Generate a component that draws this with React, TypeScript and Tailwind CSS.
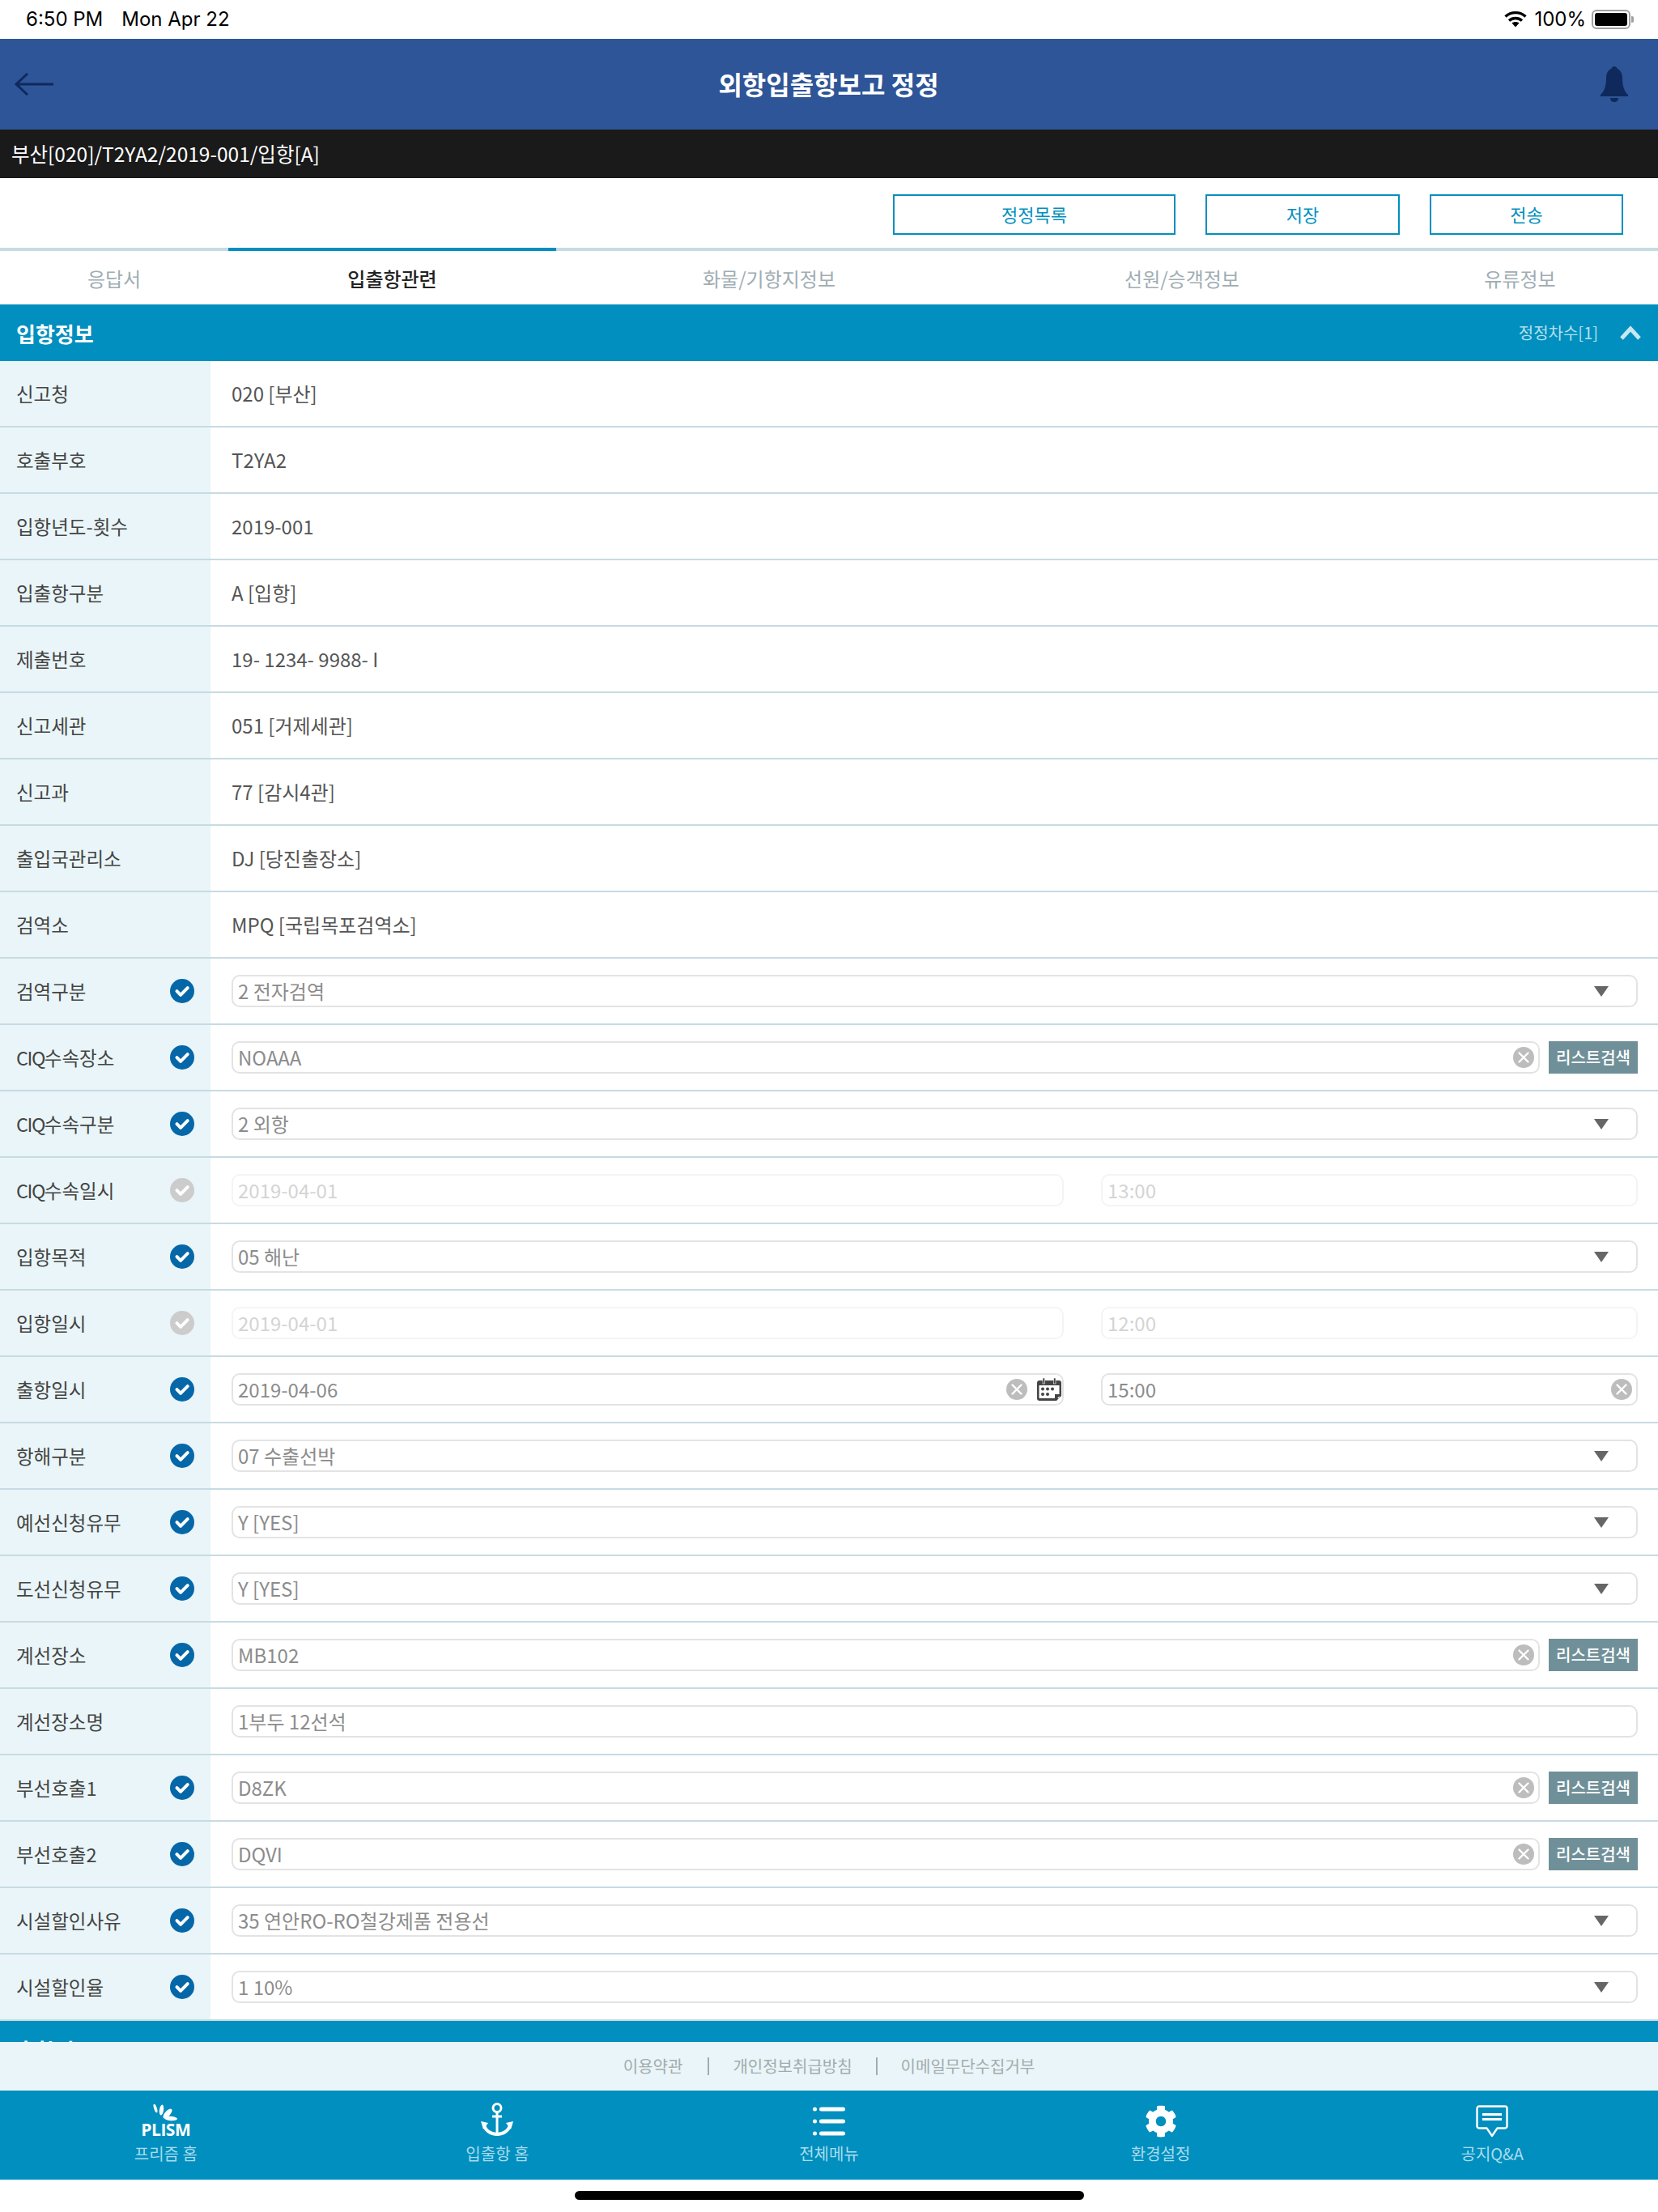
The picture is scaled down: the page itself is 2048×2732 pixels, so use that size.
import { FaCog } from 'react-icons/fa';

type Field =
  | { kind: 'text'; value: string }
  | { kind: 'select'; value: string }
  | { kind: 'search'; value: string }
  | { kind: 'input'; value: string }
  | { kind: 'datetime'; date: string; time: string; disabled?: boolean };

interface Row { label: string; check?: 'on' | 'off'; field: Field }

const ROWS: Row[] = [
  { label: '신고청', field: { kind: 'text', value: '020 [부산]' } },
  { label: '호출부호', field: { kind: 'text', value: 'T2YA2' } },
  { label: '입항년도-횟수', field: { kind: 'text', value: '2019-001' } },
  { label: '입출항구분', field: { kind: 'text', value: 'A [입항]' } },
  { label: '제출번호', field: { kind: 'text', value: '19- 1234- 9988- I' } },
  { label: '신고세관', field: { kind: 'text', value: '051 [거제세관]' } },
  { label: '신고과', field: { kind: 'text', value: '77 [감시4관]' } },
  { label: '출입국관리소', field: { kind: 'text', value: 'DJ [당진출장소]' } },
  { label: '검역소', field: { kind: 'text', value: 'MPQ [국립목포검역소]' } },
  { label: '검역구분', check: 'on', field: { kind: 'select', value: '2 전자검역' } },
  { label: 'CIQ수속장소', check: 'on', field: { kind: 'search', value: 'NOAAA' } },
  { label: 'CIQ수속구분', check: 'on', field: { kind: 'select', value: '2 외항' } },
  { label: 'CIQ수속일시', check: 'off', field: { kind: 'datetime', date: '2019-04-01', time: '13:00', disabled: true } },
  { label: '입항목적', check: 'on', field: { kind: 'select', value: '05 해난' } },
  { label: '입항일시', check: 'off', field: { kind: 'datetime', date: '2019-04-01', time: '12:00', disabled: true } },
  { label: '출항일시', check: 'on', field: { kind: 'datetime', date: '2019-04-06', time: '15:00' } },
  { label: '항해구분', check: 'on', field: { kind: 'select', value: '07 수출선박' } },
  { label: '예선신청유무', check: 'on', field: { kind: 'select', value: 'Y [YES]' } },
  { label: '도선신청유무', check: 'on', field: { kind: 'select', value: 'Y [YES]' } },
  { label: '계선장소', check: 'on', field: { kind: 'search', value: 'MB102' } },
  { label: '계선장소명', field: { kind: 'input', value: '1부두 12선석' } },
  { label: '부선호출1', check: 'on', field: { kind: 'search', value: 'D8ZK' } },
  { label: '부선호출2', check: 'on', field: { kind: 'search', value: 'DQVI' } },
  { label: '시설할인사유', check: 'on', field: { kind: 'select', value: '35 연안RO-RO철강제품 전용선' } },
  { label: '시설할인율', check: 'on', field: { kind: 'select', value: '1 10%' } },
];

const TABS = [
  { label: '응답서', cls: 'w-[282px]' },
  { label: '입출항관련', cls: 'w-[405px]', active: true },
  { label: '화물/기항지정보', cls: 'w-[526px]' },
  { label: '선원/승객정보', cls: 'w-[494px]' },
  { label: '유류정보', cls: 'w-[341px]' },
];

function CheckBadge({ on }: { on: boolean }) {
  return (
    <svg width="30" height="30" viewBox="0 0 30 30" className="shrink-0">
      <circle cx="15" cy="15" r="15" fill={on ? '#0667a8' : '#cccccc'} />
      <path d="M8.5 15.2l4.6 4.6 8.6-8.6" fill="none" stroke="white" strokeWidth="4" strokeLinecap="round" strokeLinejoin="round" />
    </svg>
  );
}

function ClearIcon() {
  return (
    <svg width="26" height="26" viewBox="0 0 26 26" className="shrink-0">
      <circle cx="13" cy="13" r="13" fill="#bdbdbd" />
      <path d="M7.5 7.5l11 11M18.5 7.5l-11 11" stroke="white" strokeWidth="2.4" strokeLinecap="round" />
    </svg>
  );
}

function CalendarIcon() {
  return (
    <svg width="30" height="28" viewBox="0 0 30 28" className="shrink-0">
      <path d="M3 3h24a3 3 0 0 1 3 3v16l-6 6H3a3 3 0 0 1-3-3V6a3 3 0 0 1 3-3z" fill="#444" />
      <rect x="2.5" y="9" width="25" height="16" fill="white" />
      <path d="M30 20l-8 0v8z" fill="#444" />
      <rect x="7" y="0" width="2.5" height="7" fill="#444" stroke="white" strokeWidth="0.6" />
      <rect x="20.5" y="0" width="2.5" height="7" fill="#444" stroke="white" strokeWidth="0.6" />
      {[7, 13, 19].map((x) => <circle key={x} cx={x} cy="13.5" r="2" fill="#444" />)}
      {[7, 13].map((x) => <circle key={x} cx={x} cy="20" r="2" fill="#444" />)}
    </svg>
  );
}

function Caret() {
  return (
    <svg width="18" height="13" viewBox="0 0 18 13" className="shrink-0">
      <path d="M0 0h18l-9 13z" fill="#666" />
    </svg>
  );
}

function Box({ children, disabled, className }: { children: React.ReactNode; disabled?: boolean; className?: string }) {
  return (
    <div className={`flex h-10 items-center rounded-[10px] border-2 pl-[6px] ${disabled ? 'border-[#f4f4f4] text-[#d4d4d4]' : 'border-[#e3e3e3] text-[#8c8c8c]'} ${className ?? ''}`}>
      {children}
    </div>
  );
}

function FieldCell({ field }: { field: Field }) {
  switch (field.kind) {
    case 'text':
      return <span className="text-[#555]">{field.value}</span>;
    case 'input':
      return <Box className="w-full"><span>{field.value}</span></Box>;
    case 'select':
      return (
        <Box className="w-full justify-between pr-[34px]">
          <span>{field.value}</span>
          <Caret />
        </Box>
      );
    case 'search':
      return (
        <div className="flex w-full gap-[11px]">
          <Box className="flex-1 justify-between pr-[5px]">
            <span>{field.value}</span>
            <ClearIcon />
          </Box>
          <button className="h-10 w-[110px] bg-[#709099] text-[20px] font-medium text-white">리스트검색</button>
        </div>
      );
    case 'datetime':
      return (
        <div className="flex w-full gap-[46px]">
          <Box disabled={field.disabled} className="w-[1028px] justify-between pr-[1px]">
            <span>{field.date}</span>
            {!field.disabled && (
              <span className="flex items-center gap-[12px]"><ClearIcon /><CalendarIcon /></span>
            )}
          </Box>
          <Box disabled={field.disabled} className="flex-1 justify-between pr-[5px]">
            <span>{field.time}</span>
            {!field.disabled && <ClearIcon />}
          </Box>
        </div>
      );
  }
}

function SectionHeader({ title, children }: { title: string; children?: React.ReactNode }) {
  return (
    <div className="flex h-[70px] items-center justify-between bg-[#008fbe] pl-5 pr-[20px]">
      <span className="text-[26px] font-bold text-white">{title}</span>
      {children}
    </div>
  );
}

function RowLabel({ label }: { label: string }) {
  if (label.startsWith('CIQ')) {
    return <span className="pt-[2px]"><span className="tracking-[-1.5px]">CIQ</span>{label.slice(3)}</span>;
  }
  return <span className="pt-[2px]">{label}</span>;
}

function PlismLogo() {
  return (
    <div className="flex flex-col items-center">
      <svg width="32" height="22" viewBox="0 0 32 22" className="ml-[-2px]">
        <ellipse cx="4" cy="6" rx="1.8" ry="5.5" fill="white" transform="rotate(-18 4 6)" />
        <ellipse cx="11.5" cy="8" rx="2.6" ry="6.5" fill="white" transform="rotate(8 11.5 8)" />
        <ellipse cx="19" cy="12.5" rx="3.2" ry="7.5" fill="white" transform="rotate(42 19 12.5)" />
        <ellipse cx="23" cy="18.5" rx="8" ry="2.8" fill="white" transform="rotate(4 23 18.5)" />
      </svg>
      <span className="font-['Open_Sans',sans-serif] text-[21px] leading-[20px] font-bold tracking-[-0.5px] text-white">PLISM</span>
    </div>
  );
}

function AnchorIcon() {
  return (
    <svg width="40" height="44" viewBox="0 0 40 44" fill="none">
      <circle cx="20" cy="7.5" r="5" stroke="white" strokeWidth="3" />
      <path d="M20 12v30M14 18h12" stroke="white" strokeWidth="3" />
      <path d="M4 28c1 7 8 12 16 12s15-5 16-12" stroke="white" strokeWidth="4" />
      <path d="M0 24l9 2-6 8zM40 24l-9 2 6 8z" fill="white" />
    </svg>
  );
}

function ListIcon() {
  return (
    <svg width="40" height="40" viewBox="0 0 40 40" fill="white">
      <circle cx="2.5" cy="5" r="2.5" /><rect x="8" y="2.5" width="32" height="5" rx="2.5" />
      <circle cx="2.5" cy="20" r="2.5" /><rect x="8" y="17.5" width="32" height="5" rx="2.5" />
      <circle cx="2.5" cy="35" r="2.5" /><rect x="8" y="32.5" width="32" height="5" rx="2.5" />
    </svg>
  );
}

function NoticeIcon() {
  return (
    <svg width="40" height="40" viewBox="0 0 40 40" fill="none">
      <path d="M4 1.5h32a2.5 2.5 0 0 1 2.5 2.5v22a2.5 2.5 0 0 1-2.5 2.5h-9.5L20 38l-6.5-9.5H4A2.5 2.5 0 0 1 1.5 26V4A2.5 2.5 0 0 1 4 1.5z" stroke="white" strokeWidth="2.4" strokeLinejoin="round" />
      <path d="M8 11.5h24M8 17.5h24" stroke="white" strokeWidth="3" />
    </svg>
  );
}

const NAV = [
  { label: '프리즘 홈', icon: <PlismLogo /> },
  { label: '입출항 홈', icon: <AnchorIcon /> },
  { label: '전체메뉴', icon: <ListIcon /> },
  { label: '환경설정', icon: <FaCog className="h-10 w-10 text-white" /> },
  { label: '공지Q&A', icon: <NoticeIcon /> },
];

export default function App() {
  return (
    <div className="flex h-[2732px] w-[2048px] flex-col overflow-hidden bg-white font-['Noto_Sans_CJK_KR','Noto_Sans',sans-serif] text-[24px]">
      {/* Status bar */}
      <div className="flex h-12 shrink-0 items-center justify-between pl-8 pr-[30px] font-['Inter',sans-serif] text-[24px] text-black">
        <div className="flex gap-[23px]">
          <span>6:50 PM</span>
          <span>Mon Apr 22</span>
        </div>
        <div className="flex items-center gap-[7px]">
          <svg width="28" height="22" viewBox="0 0 28 22" fill="none" className="mr-[2px]">
            <path d="M1.5 7.5C8.5 1 19.5 1 26.5 7.5M6 12.5c4.5-4 11.5-4 16 0" stroke="black" strokeWidth="3.4" />
            <path d="M9.5 15.5c2.5-2 6.5-2 9 0L14 20.5z" fill="black" />
          </svg>
          <span>100%</span>
          <div className="flex items-center">
            <div className="flex h-[24px] w-[48px] items-center rounded-[6px] border-2 border-[#a0a0a0] p-[2px]">
              <div className="h-full w-full rounded-[3px] bg-black" />
            </div>
            <div className="ml-[1px] h-[8px] w-[3px] rounded-r-[2px] bg-[#a0a0a0]" />
          </div>
        </div>
      </div>

      {/* Title bar */}
      <div className="flex h-[112px] shrink-0 items-center justify-between bg-[#2e5597] pl-[18px] pr-[37px]">
        <div className="w-[48px]">
          <svg width="48" height="28" viewBox="0 0 48 28" fill="none">
            <path d="M48 14H2M16 1L2 14l14 13" stroke="#10295c" strokeWidth="3" />
          </svg>
        </div>
        <h1 className="mb-[2px] ml-[4px] text-[32px] font-bold text-white">외항입출항보고 정정</h1>
        <svg width="34" height="44" viewBox="0 0 34 44" fill="#10295c">
          <circle cx="17" cy="3.5" r="3.5" />
          <path d="M17 2c6 0 10 5 10 12 0 9 2 17 7 21v2H0v-2c5-4 7-12 7-21C7 7 11 2 17 2z" />
          <path d="M12 39h10c0 3-2 5-5 5s-5-2-5-5z" />
        </svg>
      </div>

      {/* Path bar */}
      <div className="flex h-[60px] shrink-0 items-center bg-[#1a1a1a] pl-[14px] text-[24.5px] text-white">
        부산[020]/T2YA2/2019-001/입항[A]
      </div>

      {/* Actions */}
      <div className="flex h-[86px] shrink-0 items-start justify-end gap-[37px] pr-[43px] pt-5 text-[22px] text-[#008fbe]">
        <button className="h-[50px] w-[349px] border-2 border-[#008fbe] pb-[2px]">정정목록</button>
        <button className="h-[50px] w-[240px] border-2 border-[#008fbe] pb-[2px]">저장</button>
        <button className="h-[50px] w-[239px] border-2 border-[#008fbe] pb-[2px]">전송</button>
      </div>

      {/* Tabs */}
      <div className="flex h-[70px] shrink-0">
        {TABS.map((t) => (
          <div
            key={t.label}
            className={`flex items-center justify-center border-t-4 pt-[1px] text-[24px] ${t.cls} ${t.active ? 'border-[#008fbe] font-medium text-[#222]' : 'border-[#c7dbe3] text-[#a0adb3]'}`}
          >
            {t.label}
          </div>
        ))}
      </div>

      {/* Form */}
      <div className="min-h-0 flex-1 overflow-hidden">
        <SectionHeader title="입항정보">
          <div className="flex items-center gap-[26px]">
            <span className="text-[20px] text-[#b4e0ee]">정정차수[1]</span>
            <svg width="28" height="18" viewBox="0 0 28 18" fill="none">
              <path d="M3 16L14 4l11 12" stroke="#c5e8f2" strokeWidth="5" />
            </svg>
          </div>
        </SectionHeader>
        {ROWS.map((r) => (
          <div key={r.label} className="flex h-[82px] border-b-2 border-[#c7dbe3]">
            <div className="flex w-[260px] shrink-0 items-center justify-between bg-[#e9f5f8] pl-5 pr-5 text-[23.5px] text-[#444]">
              <RowLabel label={r.label} />
              {r.check && <CheckBadge on={r.check === 'on'} />}
            </div>
            <div className="flex flex-1 items-center pl-[26px] pr-[25px]">
              <FieldCell field={r.field} />
            </div>
          </div>
        ))}
        <SectionHeader title="출항정보" />
      </div>

      {/* Footer links */}
      <div className="flex h-[60px] shrink-0 items-center justify-center bg-[#e9f5f8] text-[20px] text-[#a3abae]">
        <span>이용약관</span>
        <span className="ml-[31px] mr-[29px] h-[22px] w-[2px] bg-[#a3abae]" />
        <span>개인정보취급방침</span>
        <span className="mx-[29px] h-[22px] w-[2px] bg-[#a3abae]" />
        <span>이메일무단수집거부</span>
      </div>

      {/* Bottom nav */}
      <div className="grid h-[110px] shrink-0 grid-cols-5 bg-[#008fbe] pt-[14px]">
        {NAV.map((n) => (
          <div key={n.label} className="flex flex-col items-center">
            <div className="flex h-[44px] items-end">{n.icon}</div>
            <span className="mt-[6px] text-[20px] leading-[28px] text-[#a8dcee]">{n.label}</span>
          </div>
        ))}
      </div>

      {/* Home indicator */}
      <div className="flex h-[40px] shrink-0 items-start justify-center pt-[14px]">
        <div className="h-[11px] w-[629px] rounded-full bg-black" />
      </div>
    </div>
  );
}
